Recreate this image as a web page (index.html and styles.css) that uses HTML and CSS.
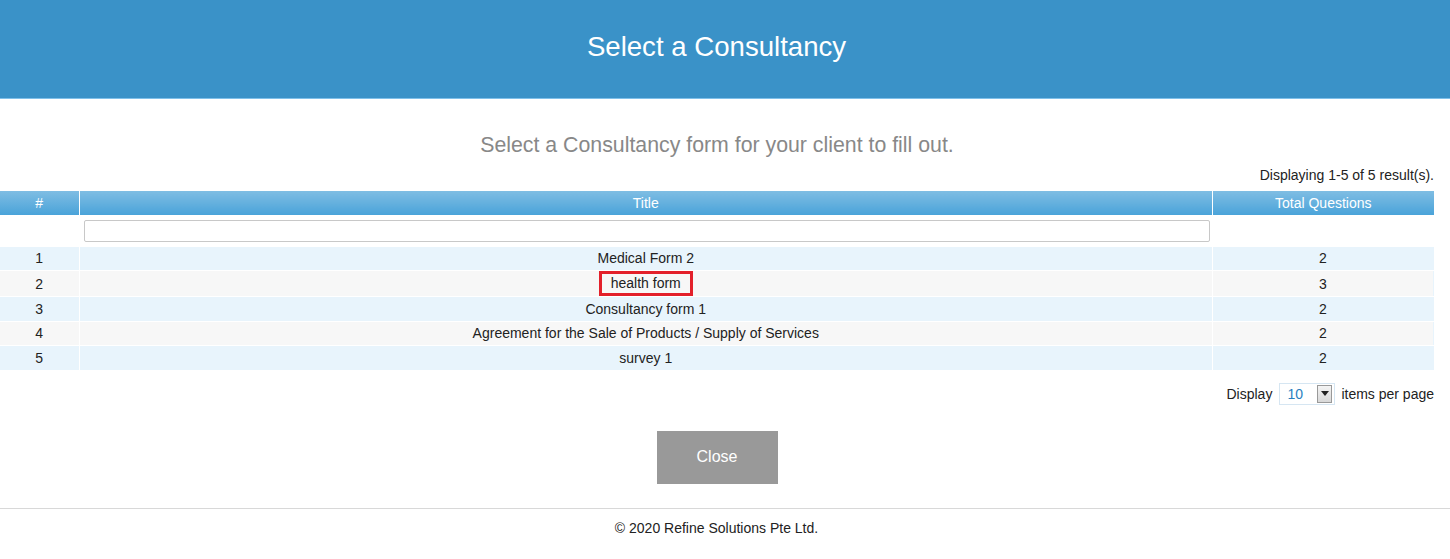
FILE: index.html
```html
<!DOCTYPE html>
<html>
<head>
<meta charset="utf-8">
<link rel="stylesheet" href="styles.css">
</head>
<body>
<header class="topbar"><h1 class="title">Select a Consultancy</h1></header>
<main class="content">
  <p class="subtitle">Select a Consultancy form for your client to fill out.</p>
  <div class="summary">Displaying 1-5 of 5 result(s).</div>
  <table class="grid">
    <thead>
      <tr><th class="c-num">#</th><th class="c-title">Title</th><th class="c-total">Total Questions</th></tr>
      <tr class="filters"><td></td><td><input class="filter" type="text"></td><td></td></tr>
    </thead>
    <tbody>
      <tr class="odd"><td>1</td><td>Medical Form 2</td><td>2</td></tr>
      <tr class="even"><td>2</td><td><span class="highlight">health form</span></td><td>3</td></tr>
      <tr class="odd"><td>3</td><td>Consultancy form 1</td><td>2</td></tr>
      <tr class="even"><td>4</td><td>Agreement for the Sale of Products / Supply of Services</td><td>2</td></tr>
      <tr class="odd"><td>5</td><td>survey 1</td><td>2</td></tr>
    </tbody>
  </table>
  <div class="pager">
    <span>Display</span>
    <span class="select"><span class="select-val">10</span><span class="select-btn"><svg width="8" height="5" viewBox="0 0 8 5"><path d="M0 0H8L4 5Z" fill="#222"/></svg></span></span>
    <span>items per page</span>
  </div>
  <div class="actions"><button class="close">Close</button></div>
</main>
<footer class="footer">© 2020 Refine Solutions Pte Ltd.</footer>
</body>
</html>
```
FILE: styles.css
```css
* { box-sizing: border-box; }
html, body { margin: 0; padding: 0; background: #fff; }
body { font-family: "Liberation Sans", Arial, Helvetica, sans-serif; color: #222; font-size: 14px; }
.topbar { background: #3a92c8; height: 99px; border-bottom: 1px solid #7fc0ea; display: flex; align-items: center; justify-content: center; padding-right: 17px; }
.title { margin: 0; font-weight: normal; color: #fff; font-size: 27.6px; padding-bottom: 5px; }
.content { padding: 0 16px 0 0; }
.subtitle { margin: 33px 0 0; text-align: center; color: #888; font-size: 21.3px; line-height: 26px; height: 26px; }
.summary { text-align: right; margin-top: 9px; line-height: 16px; height: 16px; margin-bottom: 8px; }
.grid { width: 100%; border-collapse: collapse; table-layout: fixed; }
.grid th, .grid td { border: 1px solid #fff; border-top: 0; border-bottom: 1px solid #fff; text-align: center; padding: 0; }
.grid tr > :first-child { border-left: 0; }
.grid tr > :last-child { border-right: 1px solid #e8f4fc; }
.c-num { width: 79px; }
.c-total { width: 221px; }
.grid th { height: 24px; font-weight: normal; color: #fff; background: linear-gradient(#7fbde3, #4aa3d9); font-size: 14px; }
.grid thead tr:first-child th:last-child { border-right: 0; }
.filters td { height: 31px; background: #fff; border-right: 0 !important; }
.filter { display: block; width: 1126px; height: 22px; margin: 1px 0 0 4px; border: 1px solid #c8c8c8; border-radius: 2px; }
.grid tbody td { height: 24.5px; font-size: 14px; }
.odd td { background: #e8f4fc; }
.even td { background: #f7f7f7; }
.highlight { display: inline-block; border: 3px solid #e3202a; padding: 0 9px; line-height: 19px; }
.pager { display: flex; justify-content: flex-end; align-items: center; gap: 5px; margin-top: 12px; height: 22px; }
.select { display: inline-flex; width: 56px; height: 22px; border: 1px solid #d6e6f2; background: #fff; align-items: center; justify-content: space-between; margin: 0 1px 0 2px; }
.select-val { color: #2a7fc0; padding-left: 7px; }
.select-btn { width: 15px; height: 18px; margin-right: 2px; border: 1px solid #999; background: linear-gradient(#f4f4f4, #d8d8d8); display: flex; align-items: center; justify-content: center; }
.actions { display: flex; justify-content: center; margin-top: 26px; }
.close { width: 121px; height: 53px; border: 0; background: #999; color: #fff; font-family: inherit; font-size: 16px; }
.footer { margin-top: 24px; border-top: 1px solid #d8d8d8; text-align: center; padding: 11px 17px 0 0; font-size: 14px; }
```
